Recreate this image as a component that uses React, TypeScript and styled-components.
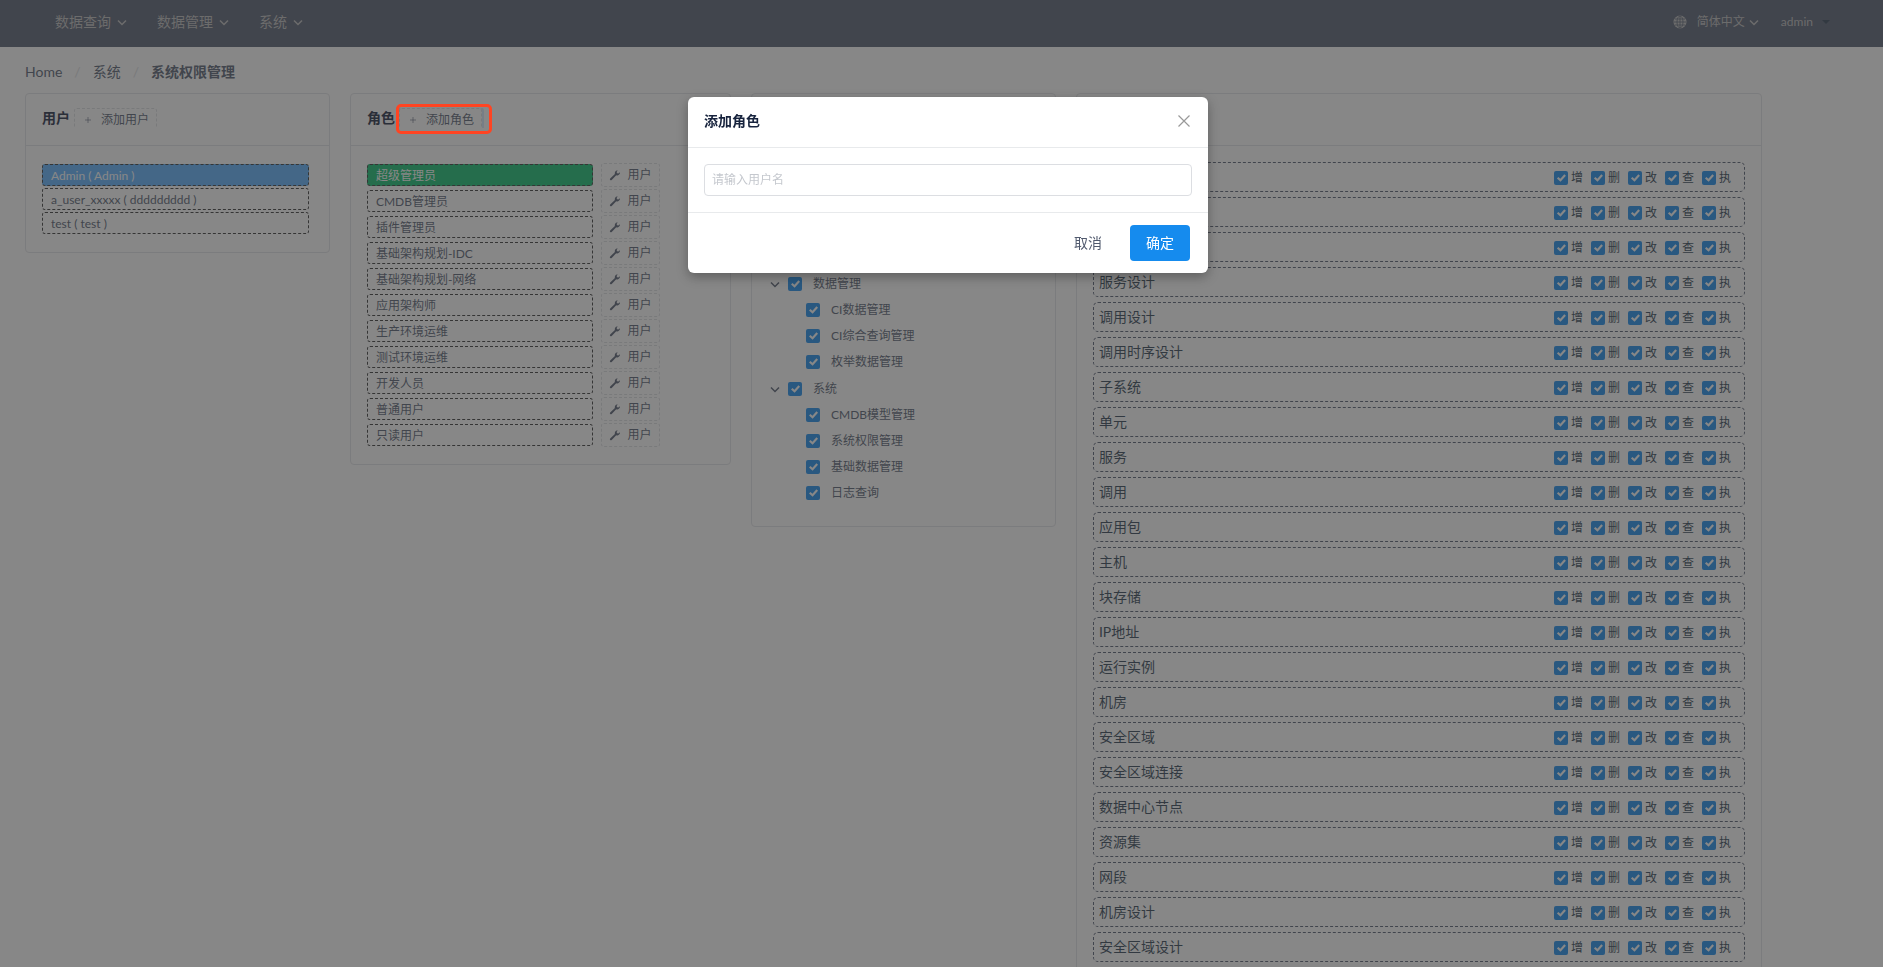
import React from "react";
import styled, { createGlobalStyle, css } from "styled-components";

const GlobalStyle = createGlobalStyle`
  *, *::before, *::after { box-sizing: border-box; }
  body {
    margin: 0;
    background: #fff;
    color: #515a6e;
    font-family: Lato, "Noto Sans CJK SC", sans-serif;
    font-size: 12px;
    font-weight: 400;
    line-height: 18px;
  }
  button, input { font-family: inherit; font-weight: inherit; }
  ul { list-style: none; margin: 0; padding: 0; }
`;

const Page = styled.div`
  height: 100vh;
  overflow: hidden;
`;

const Header = styled.header`
  display: flex;
  align-items: center;
  justify-content: space-between;
  height: 47px;
  padding: 0 52px 4px 55px;
  background: #515a6e;
  color: #bbb;
`;

const Nav = styled.nav`
  display: flex;
  gap: 30px;
`;

const NavButton = styled.button<{ $small?: boolean; $gap?: number }>`
  display: flex;
  align-items: center;
  gap: ${(p) => p.$gap ?? 6}px;
  padding: 0;
  border: 0;
  background: none;
  color: inherit;
  font-size: ${(p) => (p.$small ? 12 : 14)}px;
  line-height: 20px;
`;

const HeaderTools = styled.div`
  display: flex;
  align-items: center;
  gap: 22px;
`;

const Language = styled.div`
  display: flex;
  align-items: center;
  gap: 10px;
`;

const Crumbs = styled.nav`
  display: flex;
  align-items: center;
  gap: 12px;
  padding: 15px 25px 11px;
  font-size: 14px;
  line-height: 20px;
`;

const CrumbLink = styled.a`
  color: #515a6e;
  text-decoration: none;
`;

const CrumbSlash = styled.span`
  color: #dcdee2;
`;

const CrumbCurrent = styled.span`
  font-weight: 700;
`;

const Columns = styled.main`
  display: grid;
  grid-template-columns: 4fr 5fr 4fr 9fr;
  gap: 20px;
  align-items: start;
  padding: 0 121px 0 25px;
`;

const Card = styled.section`
  min-width: 0;
  border: 1px solid #e2e4e8;
  border-radius: 4px;
`;

const CardHead = styled.div`
  position: relative;
  height: 52px;
  padding: 14px 16px;
  border-bottom: 1px solid #e2e4e8;
`;

const CardTitle = styled.div`
  display: flex;
  gap: 4px;
  height: 20px;
  overflow: hidden;
`;

const CardName = styled.h2`
  margin: 0;
  color: #17233d;
  font-size: 14px;
  font-weight: 700;
  line-height: 20px;
`;

const CardBody = styled.div`
  padding: 16px;
`;

const SmallButton = styled.button<{ $focused?: boolean }>`
  display: flex;
  flex: none;
  align-items: center;
  gap: 7px;
  height: 24px;
  padding: 0 7px;
  border: 1px dashed #dcdee2;
  border-radius: 3px;
  background: transparent;
  color: #515a6e;
  font-size: 12px;
  line-height: 18px;
  ${(p) =>
    p.$focused &&
    css`
      box-shadow: 0 0 0 2px rgba(45, 140, 240, 0.2);
    `}
`;

const Highlight = styled.span`
  position: absolute;
  z-index: 20;
  top: 10px;
  left: 45px;
  width: 96px;
  height: 30px;
  border: 3px solid #ff4422;
  border-radius: 5px;
  pointer-events: none;
`;

const UserList = styled.ul`
  display: grid;
  gap: 2px;
  padding: 2px 4px 2px 0;
`;

const RoleRow = styled.li`
  display: flex;
  align-items: center;
  gap: 8px;
  height: 26px;
`;

const Entry = styled.div<{ $fill?: string }>`
  height: 22px;
  padding: 1px 8px;
  border: 1px dashed #333;
  border-radius: 3px;
  background: ${(p) => p.$fill || "transparent"};
  color: ${(p) => (p.$fill ? "#fff" : "#515a6e")};
  line-height: 20px;
`;

const RoleEntry = styled(Entry)`
  width: 65%;
`;

const Tree = styled.ul`
  display: grid;
  gap: 1px;
  padding: 4px 0;
`;

const TreeRow = styled.div<{ $child?: boolean }>`
  display: flex;
  align-items: center;
  height: 26px;
  padding-left: ${(p) => (p.$child ? 38 : 0)}px;
`;

const Toggle = styled.button`
  display: flex;
  justify-content: center;
  width: 14px;
  margin-right: 6px;
  padding: 0;
  border: 0;
  background: none;
  color: #515a6e;
`;

const Check = styled.label<{ $wide?: boolean }>`
  display: flex;
  align-items: center;
  gap: ${(p) => (p.$wide ? 11 : 3)}px;
`;

const Box = styled.input`
  position: relative;
  appearance: none;
  width: 14px;
  height: 14px;
  margin: 0;
  border-radius: 2px;
  background: #158bee;

  &:checked::after {
    content: "";
    position: absolute;
    inset: 3px 2px 3px 3px;
    background: #fff;
    clip-path: polygon(0 55%, 16% 36%, 38% 58%, 82% 4%, 100% 22%, 40% 98%);
  }
`;

const PermissionList = styled.ul`
  display: grid;
  gap: 5px;
`;

const PermissionRow = styled.li`
  display: flex;
  align-items: center;
  justify-content: space-between;
  height: 30px;
  padding: 0 13px 0 5px;
  border: 1px dashed #515a6e;
  border-radius: 5px;
`;

const PermissionName = styled.span`
  color: #2c3e50;
  font-size: 14px;
  line-height: 20px;
`;

const Actions = styled.div`
  display: flex;
  gap: 8px;
  padding-top: 2px;
  color: #2c3e50;
`;

const Mask = styled.div`
  position: fixed;
  z-index: 10;
  inset: 0;
  display: flex;
  justify-content: center;
  align-items: flex-start;
  padding: 97px 0 0 13px;
  background: rgba(55, 55, 55, 0.6);
`;

const Dialog = styled.form`
  width: 520px;
  border-radius: 6px;
  background: #fff;
  box-shadow: 0 4px 12px rgba(0, 0, 0, 0.3);
`;

const DialogHead = styled.div`
  display: flex;
  align-items: center;
  justify-content: space-between;
  height: 51px;
  padding: 0 17px 2px 16px;
  border-bottom: 1px solid #e8eaec;
`;

const DialogTitle = styled.h1`
  margin: 0;
  color: #17233d;
  font-size: 14px;
  font-weight: 700;
  line-height: 20px;
`;

const CloseButton = styled.button`
  display: flex;
  padding: 0;
  border: 0;
  background: none;
  color: #999;
`;

const DialogBody = styled.div`
  padding: 16px;
`;

const NameInput = styled.input`
  display: block;
  width: 100%;
  height: 32px;
  padding: 3px 7px 5px;
  border: 1px solid #dcdee2;
  border-radius: 4px;
  color: #515a6e;
  font-size: 12px;
  outline: none;

  &::placeholder {
    color: #c5c8ce;
  }
`;

const DialogFoot = styled.div`
  display: flex;
  justify-content: flex-end;
  gap: 12px;
  padding: 12px 18px;
  border-top: 1px solid #e8eaec;
`;

const DialogButton = styled.button<{ $primary?: boolean }>`
  height: 36px;
  padding: 0 16px 2px;
  border: 0;
  border-radius: 4px;
  background: ${(p) => (p.$primary ? "#158bee" : "transparent")};
  color: ${(p) => (p.$primary ? "#fff" : "#515a6e")};
  font-size: 14px;
`;

const Chevron = () => (
  <svg width="10" height="10" viewBox="0 0 10 10" fill="none" stroke="currentColor" strokeWidth="1.5" aria-hidden="true">
    <path d="M1 3.5 5 7.5 9 3.5" />
  </svg>
);

const Globe = () => (
  <svg width="14" height="14" viewBox="0 0 14 14" fill="none" aria-hidden="true">
    <circle cx="7" cy="7" r="6.5" fill="#bbb" />
    <g stroke="#515a6e" strokeWidth="0.8">
      <path d="M7 1v12M1 7h12M2 4h10M2 10h10" />
      <ellipse cx="7" cy="7" rx="3" ry="6" />
    </g>
  </svg>
);

const Caret = () => (
  <svg width="10" height="6" viewBox="0 0 10 6" aria-hidden="true">
    <path d="M1 1h8L5 5z" fill="#2c3e50" />
  </svg>
);

const Plus = () => (
  <svg width="12" height="12" viewBox="0 0 12 12" stroke="currentColor" strokeWidth="0.6" aria-hidden="true">
    <path d="M6 3v6M3 6h6" />
  </svg>
);

const Wrench = () => (
  <svg width="12" height="12" viewBox="0 0 12 12" aria-hidden="true">
    <path
      d="M1.200 10.900C.700 10.400.700 9.900 1.200 9.400L5.900 5.100C5.500 3.700 6.200 2.100 7.700 1.600L8.700 1.500 7.600 3 8.100 4.200 9.400 4.500 10.900 3.300C11.200 4.900 10 6.300 8.500 6.400 8 6.400 7.600 6.400 7.200 6.200L2.700 10.900C2.200 11.400 1.700 11.400 1.200 10.900Z"
      fill="currentColor"
    />
  </svg>
);

const Cross = () => (
  <svg width="14" height="14" viewBox="0 0 14 14" stroke="currentColor" strokeWidth="1.2" aria-hidden="true">
    <path d="M1.500 1.500 12.500 12.500M12.500 1.500 1.500 12.500" />
  </svg>
);

const users = ["Admin ( Admin )", "a_user_xxxxx ( ddddddddd )", "test ( test )"];

const roles = [
  "超级管理员",
  "CMDB管理员",
  "插件管理员",
  "基础架构规划-IDC",
  "基础架构规划-网络",
  "应用架构师",
  "生产环境运维",
  "测试环境运维",
  "开发人员",
  "普通用户",
  "只读用户",
];

const menus = [
  { name: "数据查询", children: ["CI数据查询", "CI综合查询", "枚举数据查询"] },
  { name: "数据管理", children: ["CI数据管理", "CI综合查询管理", "枚举数据管理"] },
  { name: "系统", children: ["CMDB模型管理", "系统权限管理", "基础数据管理", "日志查询"] },
];

const dataTypes = [
  "系统设计",
  "子系统设计",
  "产品",
  "服务设计",
  "调用设计",
  "调用时序设计",
  "子系统",
  "单元",
  "服务",
  "调用",
  "应用包",
  "主机",
  "块存储",
  "IP地址",
  "运行实例",
  "机房",
  "安全区域",
  "安全区域连接",
  "数据中心节点",
  "资源集",
  "网段",
  "机房设计",
  "安全区域设计",
];

const actions = ["增", "删", "改", "查", "执"];

const CheckItem = ({ label, wide }: { label: string; wide?: boolean }) => (
  <Check $wide={wide}>
    <Box type="checkbox" defaultChecked />
    {label}
  </Check>
);

export default function App() {
  return (
    <>
      <GlobalStyle />
      <Page>
        <Header>
          <Nav>
            {["数据查询", "数据管理", "系统"].map((name) => (
              <NavButton key={name} type="button">
                {name}
                <Chevron />
              </NavButton>
            ))}
          </Nav>
          <HeaderTools>
            <Language>
              <Globe />
              <NavButton type="button" $small $gap={4}>
                简体中文
                <Chevron />
              </NavButton>
            </Language>
            <NavButton type="button" $small $gap={8}>
              admin
              <Caret />
            </NavButton>
          </HeaderTools>
        </Header>

        <Crumbs>
          <CrumbLink href="#home">Home</CrumbLink>
          <CrumbSlash>/</CrumbSlash>
          <CrumbLink href="#system">系统</CrumbLink>
          <CrumbSlash>/</CrumbSlash>
          <CrumbCurrent>系统权限管理</CrumbCurrent>
        </Crumbs>

        <Columns>
          <Card>
            <CardHead>
              <CardTitle>
                <CardName>用户</CardName>
                <SmallButton type="button">
                  <Plus />
                  添加用户
                </SmallButton>
              </CardTitle>
            </CardHead>
            <CardBody>
              <UserList>
                {users.map((name, i) => (
                  <li key={name}>
                    <Entry $fill={i === 0 ? "#57b0ff" : undefined}>{name}</Entry>
                  </li>
                ))}
              </UserList>
            </CardBody>
          </Card>

          <Card>
            <CardHead>
              <CardTitle>
                <CardName>角色</CardName>
                <SmallButton type="button" $focused>
                  <Plus />
                  添加角色
                </SmallButton>
              </CardTitle>
              <Highlight />
            </CardHead>
            <CardBody>
              <ul>
                {roles.map((name, i) => (
                  <RoleRow key={name}>
                    <RoleEntry $fill={i === 0 ? "#0abf6c" : undefined}>{name}</RoleEntry>
                    <SmallButton type="button">
                      <Wrench />
                      用户
                    </SmallButton>
                  </RoleRow>
                ))}
              </ul>
            </CardBody>
          </Card>

          <Card>
            <CardHead />
            <CardBody>
              <Tree>
                {menus.map((menu) => (
                  <li key={menu.name}>
                    <TreeRow>
                      <Toggle type="button" aria-label={menu.name}>
                        <Chevron />
                      </Toggle>
                      <CheckItem label={menu.name} wide />
                    </TreeRow>
                    {menu.children.map((child) => (
                      <TreeRow key={child} $child>
                        <CheckItem label={child} wide />
                      </TreeRow>
                    ))}
                  </li>
                ))}
              </Tree>
            </CardBody>
          </Card>

          <Card>
            <CardHead />
            <CardBody>
              <PermissionList>
                {dataTypes.map((name) => (
                  <PermissionRow key={name}>
                    <PermissionName>{name}</PermissionName>
                    <Actions>
                      {actions.map((action) => (
                        <CheckItem key={action} label={action} />
                      ))}
                    </Actions>
                  </PermissionRow>
                ))}
              </PermissionList>
            </CardBody>
          </Card>
        </Columns>
      </Page>

      <Mask>
        <Dialog role="dialog" aria-modal="true" aria-labelledby="dialog-title" onSubmit={(e) => e.preventDefault()}>
          <DialogHead>
            <DialogTitle id="dialog-title">添加角色</DialogTitle>
            <CloseButton type="button" aria-label="关闭">
              <Cross />
            </CloseButton>
          </DialogHead>
          <DialogBody>
            <NameInput type="text" aria-label="用户名" placeholder="请输入用户名" />
          </DialogBody>
          <DialogFoot>
            <DialogButton type="button">取消</DialogButton>
            <DialogButton type="submit" $primary>
              确定
            </DialogButton>
          </DialogFoot>
        </Dialog>
      </Mask>
    </>
  );
}
